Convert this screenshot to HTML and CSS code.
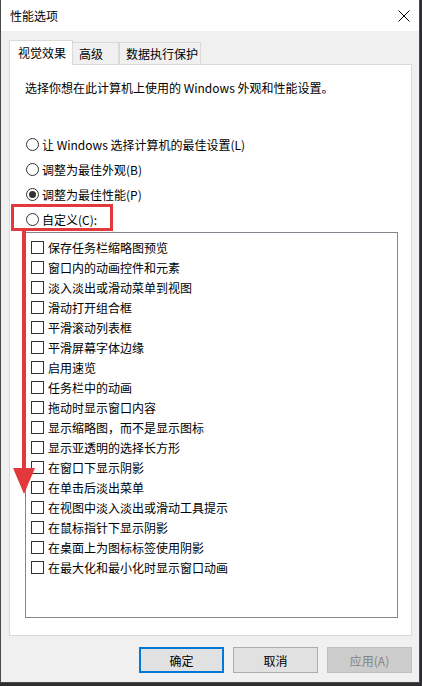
FILE: index.html
```html
<!doctype html>
<html>
    <head>
        <meta charset="utf-8">
        <title>性能选项</title>
        <link rel="stylesheet" href="styles.css">
    </head>
    <body>
        <div class="window">
            <div class="titlebar">
                <span class="title">性能选项</span>
                <svg class="close" width="12" height="12" viewBox="0 0 12 12">
                    <path d="M0.5 0.5 L11.5 11.5 M11.5 0.5 L0.5 11.5" stroke="#000" stroke-width="1" fill="none"/>
                </svg>
            </div>
            <div class="content">
                <div class="tabs">
                    <div class="tab active">视觉效果</div>
                    <div class="tab t2">高级</div>
                    <div class="tab t3">数据执行保护</div>
                </div>
                <div class="panel">
                    <p class="intro">选择你想在此计算机上使用的 Windows 外观和性能设置。</p>
                    <div class="radios">
                        <div class="radio"><span class="dot"></span>让 Windows 选择计算机的最佳设置(L)</div>
                        <div class="radio"><span class="dot"></span>调整为最佳外观(B)</div>
                        <div class="radio"><span class="dot on"></span>调整为最佳性能(P)</div>
                        <div class="radio"><span class="dot"></span>自定义(C):</div>
                    </div>
                    <div class="listbox">
                        <div class="item"><span class="box"></span>保存任务栏缩略图预览</div>
                        <div class="item"><span class="box"></span>窗口内的动画控件和元素</div>
                        <div class="item"><span class="box"></span>淡入淡出或滑动菜单到视图</div>
                        <div class="item"><span class="box"></span>滑动打开组合框</div>
                        <div class="item"><span class="box"></span>平滑滚动列表框</div>
                        <div class="item"><span class="box"></span>平滑屏幕字体边缘</div>
                        <div class="item"><span class="box"></span>启用速览</div>
                        <div class="item"><span class="box"></span>任务栏中的动画</div>
                        <div class="item"><span class="box"></span>拖动时显示窗口内容</div>
                        <div class="item"><span class="box"></span>显示缩略图，而不是显示图标</div>
                        <div class="item"><span class="box"></span>显示亚透明的选择长方形</div>
                        <div class="item"><span class="box"></span>在窗口下显示阴影</div>
                        <div class="item"><span class="box"></span>在单击后淡出菜单</div>
                        <div class="item"><span class="box"></span>在视图中淡入淡出或滑动工具提示</div>
                        <div class="item"><span class="box"></span>在鼠标指针下显示阴影</div>
                        <div class="item"><span class="box"></span>在桌面上为图标标签使用阴影</div>
                        <div class="item"><span class="box"></span>在最大化和最小化时显示窗口动画</div>
                    </div>
                </div>
                <div class="buttons">
                    <button class="btn default">确定</button>
                    <button class="btn">取消</button>
                    <button class="btn disabled">应用(A)</button>
                </div>
            </div>
            <!-- 红色标注 -->
            <div class="mark-box"></div>
            <div class="mark-shaft"></div>
            <div class="mark-head"></div>
        </div>
    </body>
</html>
```

FILE: styles.css
```css
*{margin:0;padding:0;box-sizing:border-box;}
body{
    background:#2d2d30;
    font-family:"Noto Sans CJK SC","Liberation Sans",sans-serif;
    font-size:12px;
    color:#000;
}
.window{
    width:420px;
    height:683px;
    background:#f0f0f0;
    border:1px solid #4a4a4a;
    border-top:none;
    position:relative;
    display:flex;
    flex-direction:column;
}
.titlebar{
    height:31px;
    background:#fff;
    display:flex;
    align-items:center;
    justify-content:space-between;
    padding:0 9px 0 9px;
}
.title{line-height:16px;}
.close{margin-right:0;}
.content{
    padding:9px 7px 0 8px;
    display:flex;
    flex-direction:column;
}
.tabs{
    display:flex;
    align-items:flex-end;
    height:24px;
}
.tab{
    height:22px;
    line-height:21px;
    background:#f0f0f0;
    border:1px solid #d9d9d9;
    border-bottom:none;
    padding-left:6px;
}
.tab.active{
    height:25px;
    margin-bottom:-1px;
    background:#fff;
    position:relative;
    z-index:1;
    width:64px;
    padding-left:8px;
    line-height:24px;
}
.t2{width:46px;border-left:none;}
.t3{width:82px;border-left:1px solid #d9d9d9;padding-left:6px;}
.panel{
    background:#fff;
    border:1px solid #d9d9d9;
    height:572px;
    padding:15px 13px 0 15px;
}
.intro{line-height:16px;}
.radios{margin-top:36px;}
.radio{
    height:25px;
    display:flex;
    align-items:center;
    margin-left:1px;
}
.dot{
    width:13px;
    height:13px;
    border:1px solid #333;
    border-radius:50%;
    margin-right:3px;
    display:flex;
    align-items:center;
    justify-content:center;
}
.dot.on::after{
    content:"";
    width:7px;
    height:7px;
    border-radius:50%;
    background:#333;
}
.listbox{
    height:386px;
    border:1px solid #828790;
    padding:4px 0 0 5px;
}
.item{
    height:20px;
    display:flex;
    align-items:center;
}
.box{
    width:13px;
    height:13px;
    border:1px solid #333;
    background:#fff;
    margin-right:4px;
}
.buttons{
    display:flex;
    justify-content:flex-end;
    gap:9px;
    margin-top:11px;
    padding-right:0;
}
.btn{
    width:85px;
    height:26px;
    font-family:inherit;
    font-size:12px;
    background:#e1e1e1;
    border:1px solid #adadad;
    color:#000;
}
.btn.default{border:2px solid #0078d7;}
.btn.disabled{
    background:#cccccc;
    border-color:#bfbfbf;
    color:#838383;
}
.mark-box{
    position:absolute;
    left:10px;
    top:204px;
    width:102px;
    height:27px;
    border:3px solid #e4393c;
}
.mark-shaft{
    position:absolute;
    left:21px;
    top:230px;
    width:4px;
    height:240px;
    background:#e4393c;
}
.mark-head{
    position:absolute;
    left:12px;
    top:468px;
    width:0;
    height:0;
    border-left:11px solid transparent;
    border-right:11px solid transparent;
    border-top:26px solid #e4393c;
}
```
